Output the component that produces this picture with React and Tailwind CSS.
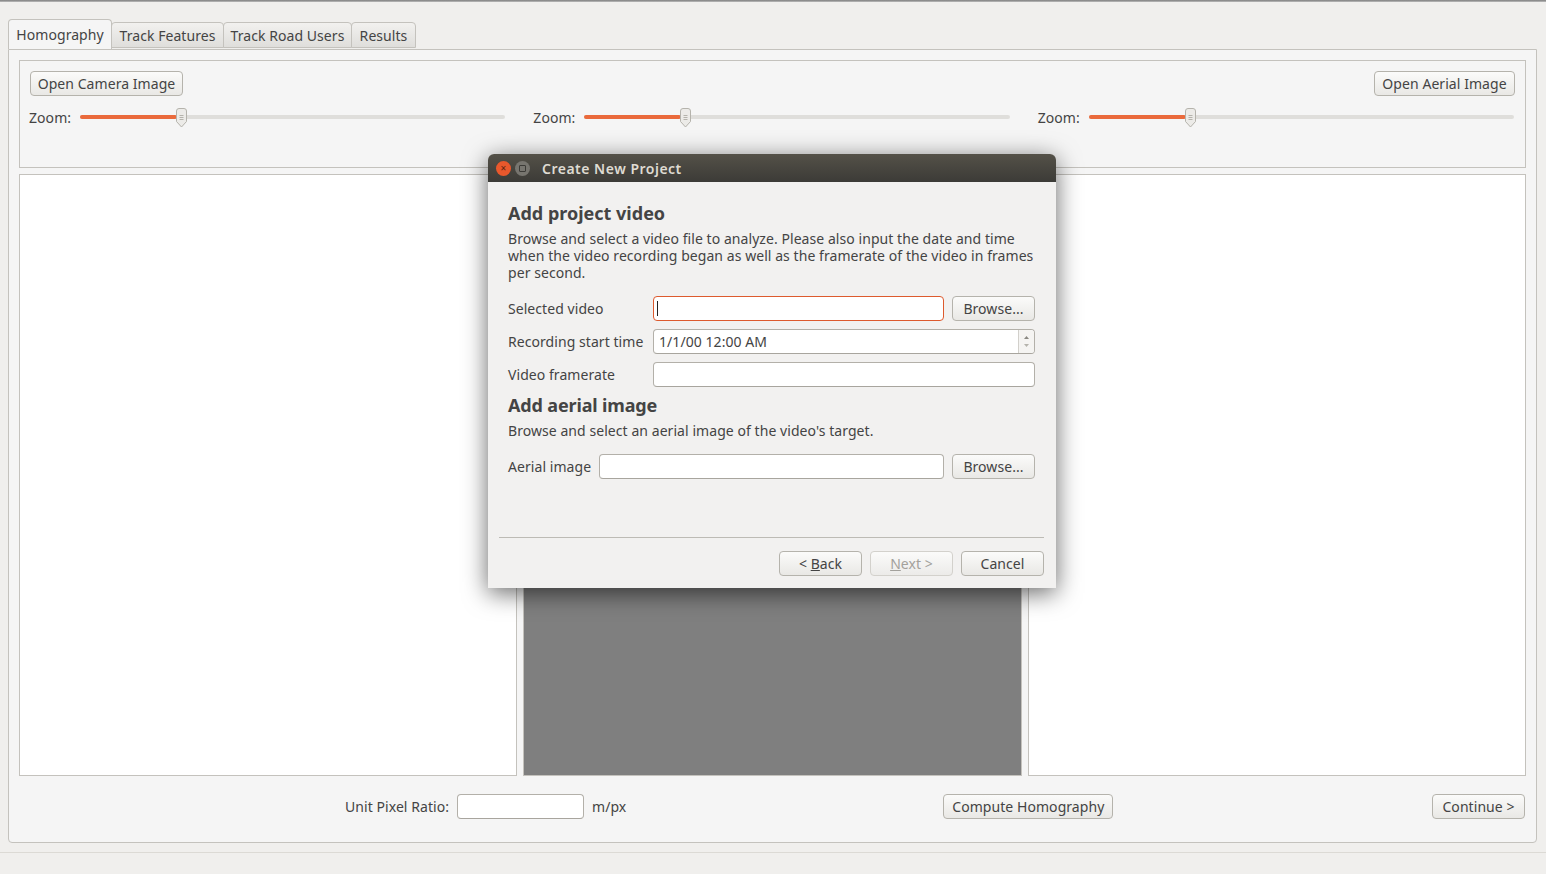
import { useState } from 'react';

const btn =
  'flex h-[25px] shrink-0 items-center justify-center rounded-[4px] border border-[#b5b3ac] bg-gradient-to-b from-[#fbfbfa] to-[#e9e8e5] text-[14px] text-[#444444]';
const field = 'h-[25px] rounded-[4px] border border-[#b3b0a9] border-b-[#a8a59e] bg-white';

function Slider() {
  return (
    <div className="flex h-[20px] flex-1 items-center">
      <span className="w-[51px] shrink-0 text-[14px] text-[#444444]">Zoom:</span>
      <div className="relative h-[4px] flex-1 rounded-full bg-[#dfdedb]">
        <div className="h-full w-[97px] rounded-full bg-[#ea6a3c]" />
        <svg className="absolute left-[95px] top-[-7px]" width="13" height="20" viewBox="0 0 13 20">
          <path
            d="M1.5 3 Q1.5 .5 4 .5 H9 Q11.5 .5 11.5 3 V13.5 L6.5 19 L1.5 13.5 Z"
            fill="#ecebe8"
            stroke="#b5b3ac"
          />
          <path d="M4.5 7.5H8.5M4.5 9.5H8.5M4.5 11.5H8.5" stroke="#b5b3ac" />
        </svg>
      </div>
    </div>
  );
}

function Tab({ label, active, width }) {
  if (active) {
    return (
      <div className="z-10 mb-[-1px] flex h-[30px] w-[104px] items-center justify-center rounded-t-[4px] border border-b-0 border-[#c4c2bd] bg-[#f5f5f5] text-[14px] text-[#444444]">
        {label}
      </div>
    );
  }
  return (
    <div
      className={`${width} mt-[3px] ml-[-1px] flex h-[26px] items-center justify-center rounded-t-[4px] border border-[#c4c2bd] bg-gradient-to-b from-[#f2f1ef] to-[#dfdedb] text-[14px] text-[#444444]`}
    >
      {label}
    </div>
  );
}

function Dialog() {
  const [video, setVideo] = useState('');

  return (
    <div className="absolute left-[488px] top-[154px] h-[434px] w-[568px] overflow-hidden rounded-t-[6px] bg-[#f2f1f0] shadow-[0_5px_24px_rgba(0,0,0,0.6)]">
      {/* Title bar */}
      <div className="flex h-[28px] items-center bg-gradient-to-b from-[#545148] to-[#3c3b37] pl-[8px]">
        <div className="flex h-[15px] w-[15px] items-center justify-center rounded-full bg-[#e9582c] text-[10px] leading-none text-[#5a2410]">
          ×
        </div>
        <div className="ml-[4px] flex h-[15px] w-[15px] items-center justify-center rounded-full bg-[#77756f]">
          <div className="h-[7px] w-[7px] rounded-[1px] border border-[#3c3b37]" />
        </div>
        <span className="ml-[12px] text-[14px] font-semibold tracking-[0.5px] text-[#dfdbd2]">Create New Project</span>
      </div>

      <div className="px-[20px] pt-[18px] text-[#444444]">
        <h2 className="text-[18px] font-bold leading-[26px] tracking-normal">Add project video</h2>
        <p className="mt-[4px] text-[14px] leading-[17px]">
          Browse and select a video file to analyze. Please also input the date and time
          <br />
          when the video recording began as well as the framerate of the video in frames
          <br />
          per second.
        </p>

        <div className="mt-[15px] flex items-center">
          <span className="w-[145px] text-[14px]">Selected video</span>
          <div className="flex h-[25px] w-[291px] items-center rounded-[4px] border border-[#dd5a2e] bg-white pl-[3px]">
            <input
              value={video}
              onChange={(e) => setVideo(e.target.value)}
              className="w-full bg-transparent outline-none"
            />
            <div className="absolute h-[15px] w-px bg-[#222]" />
          </div>
          <button className={`${btn} ml-[8px] w-[83px]`}>Browse...</button>
        </div>

        <div className="mt-[8px] flex items-center">
          <span className="w-[145px] text-[14px]">Recording start time</span>
          <div className={`${field} flex w-[382px] items-center overflow-hidden`}>
            <span className="flex-1 pl-[5px] text-[14px]">1/1/00 12:00 AM</span>
            <div className="flex h-full w-[16px] flex-col items-center justify-center gap-[5px] border-l border-[#d2d0cb] bg-[#f5f4f2]">
              <svg width="5" height="3" viewBox="0 0 5 3">
                <path d="M2.5 0L5 3H0Z" fill="#8a8882" />
              </svg>
              <svg width="5" height="3" viewBox="0 0 5 3">
                <path d="M0 0H5L2.5 3Z" fill="#b5b3ac" />
              </svg>
            </div>
          </div>
        </div>

        <div className="mt-[8px] flex items-center">
          <span className="w-[145px] text-[14px]">Video framerate</span>
          <div className={`${field} w-[382px]`} />
        </div>

        <h2 className="mt-[5px] text-[18px] font-bold leading-[26px] tracking-[-0.15px]">Add aerial image</h2>
        <p className="mt-[4px] text-[14px] leading-[17px]">Browse and select an aerial image of the video's target.</p>

        <div className="mt-[15px] flex items-center">
          <span className="w-[91px] text-[14px]">Aerial image</span>
          <div className={`${field} w-[345px]`} />
          <button className={`${btn} ml-[8px] w-[83px]`}>Browse...</button>
        </div>
      </div>

      <div className="mx-[11px] mt-[58px] h-px w-[545px] bg-[#bdbbb5]" />
      <div className="mt-[13px] flex justify-end gap-[8px] pr-[12px]">
        <button className={`${btn} w-[83px]`}>
          &lt;&nbsp;<span className="underline">B</span>ack
        </button>
        <button className={`${btn} w-[83px] border-[#d3d1cc] from-[#f2f1f0] to-[#ecebe9] text-[#a3a19c]`}>
          <span className="underline">N</span>ext &gt;
        </button>
        <button className={`${btn} w-[83px]`}>Cancel</button>
      </div>
    </div>
  );
}

export default function App() {
  return (
    <div className="relative flex h-screen w-full flex-col overflow-hidden bg-[#f0efed] font-['Noto_Sans',sans-serif] tracking-[0.06px]">
      <div className="h-[2px] shrink-0 bg-gradient-to-b from-[#7d7d7d] to-[#bdbdbd]" />

      <div className="flex-1 px-[8px] pt-[17px]">
        {/* Tabs */}
        <div className="flex h-[30px] items-start">
          <Tab label="Homography" active />
          <Tab label="Track Features" width="w-[113px]" />
          <Tab label="Track Road Users" width="w-[129px]" />
          <Tab label="Results" width="w-[65px]" />
        </div>

        {/* Tab pane */}
        <div className="flex h-[794px] w-[1529px] flex-col rounded-b-[4px] border border-[#c4c2bd] bg-[#f5f5f5] px-[10px] pt-[10px]">
          <div className="h-[108px] shrink-0 border border-[#c4c2bd] px-[10px] pt-[10px]">
            <div className="flex justify-between">
              <button className={`${btn} w-[153px]`}>Open Camera Image</button>
              <button className={`${btn} w-[141px]`}>Open Aerial Image</button>
            </div>
            <div className="mt-[11px] ml-[-1px] mr-[1px] flex gap-[28px]">
              <Slider />
              <Slider />
              <Slider />
            </div>
          </div>

          <div className="mt-[6px] flex h-[602px] shrink-0 gap-[6px]">
            <div className="flex-1 border border-[#c4c2bd] bg-white" />
            <div className="flex-1 border border-[#c4c2bd] bg-[#7f7f7f]" />
            <div className="flex-1 border border-[#c4c2bd] bg-white" />
          </div>

          <div className="mt-[18px] flex h-[25px] items-center text-[14px] text-[#444444]">
            <span className="ml-[326px]">Unit Pixel Ratio:</span>
            <div className={`${field} ml-[8px] w-[127px]`} />
            <span className="ml-[8px]">m/px</span>
            <button className={`${btn} ml-[317px] w-[170px]`}>Compute Homography</button>
            <button className={`${btn} ml-auto mr-[1px] w-[93px]`}>Continue &gt;</button>
          </div>
        </div>
      </div>

      <div className="h-[22px] shrink-0 border-t border-[#dcdad5]" />

      <Dialog />
    </div>
  );
}
